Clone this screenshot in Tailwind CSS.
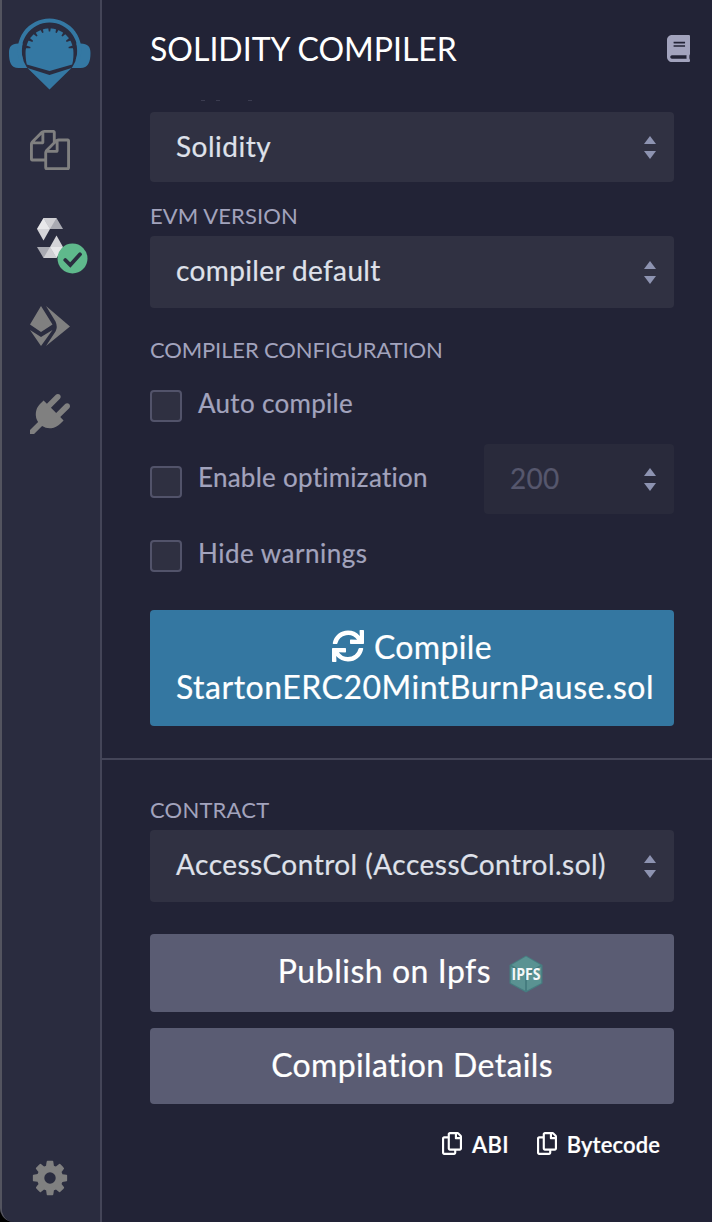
<!DOCTYPE html>
<html lang="en">
<head>
<meta charset="utf-8">
<title>Solidity Compiler</title>
<script src="https://cdn.jsdelivr.net/npm/@tailwindcss/browser@4"></script>
</head>
<body class="bg-black font-['Lato',sans-serif]">
<svg class="hidden">
  <symbol id="carets" viewBox="0 0 12 23"><path d="M6 0l6 8H0zM6 23l6-8H0z" fill="#8d93b1"/></symbol>
  <symbol id="copy" viewBox="0 0 448 512"><path fill="#fff" d="M433.941 65.941l-51.882-51.882A48 48 0 0 0 348.118 0H176c-26.51 0-48 21.49-48 48v48H48c-26.51 0-48 21.49-48 48v320c0 26.51 21.49 48 48 48h224c26.51 0 48-21.49 48-48v-48h80c26.51 0 48-21.49 48-48V99.882a48 48 0 0 0-14.059-33.941zM266 464H54a6 6 0 0 1-6-6V150a6 6 0 0 1 6-6h74v224c0 26.51 21.49 48 48 48h96v42a6 6 0 0 1-6 6zm128-96H182a6 6 0 0 1-6-6V54a6 6 0 0 1 6-6h106v88c0 13.255 10.745 24 24 24h88v202a6 6 0 0 1-6 6zm6-256h-64V48h9.632c1.591 0 3.117.632 4.243 1.757l48.368 48.368a6 6 0 0 1 1.757 4.243V112z"/></symbol>
</svg>
<div class="flex h-[1222px] w-[712px] overflow-hidden rounded-bl-[14px] border-l-2 border-[#53545f] bg-[#222336]">
  <!-- icon rail -->
  <nav class="flex w-[100px] shrink-0 flex-col border-r-2 border-[#444558] bg-[#2a2c3f]">
    <svg class="mt-[18px] ml-[6px] h-[72px] w-[84px]" viewBox="8 18 84 72">
      <g fill="#3478a3">
        <path d="M25 43.500H18.500C11 43.500 9 47 9 53C9 62 11 68 18.500 68H28zM74 43.500H80.500C88 43.500 90.500 47 90.500 53C90.500 62 88 68 80.500 68H71z"/>
        <circle cx="49.500" cy="51" r="27.800" fill="#2a2c3f"/>
        <path d="M19.200 60A31.800 31.800 0 1 1 79.800 60L75.700 60A27.900 27.900 0 1 0 23.300 60z"/>
        <path d="M27.500 68L49.500 75L71.500 68L49.500 89.500z"/>
        <path d="M26.800 64.500C25.300 58 25.500 51 25.700 50A23.900 23.900 0 0 1 73.300 50C73.700 54 73.500 60 72.200 64.500L49.500 71z"/>
      </g>
      <g fill="#2a2c3f">
        <path id="notch" d="M47.900 26H51.100L50.200 31.600H48.800z"/>
        <use href="#notch" transform="rotate(20 49.500 51)"/><use href="#notch" transform="rotate(40 49.500 51)"/><use href="#notch" transform="rotate(60 49.500 51)"/><use href="#notch" transform="rotate(80 49.500 51)"/>
        <use href="#notch" transform="rotate(-20 49.500 51)"/><use href="#notch" transform="rotate(-40 49.500 51)"/><use href="#notch" transform="rotate(-60 49.500 51)"/><use href="#notch" transform="rotate(-80 49.500 51)"/>
      </g>
    </svg>
    <svg class="mt-10 ml-7 size-10" viewBox="0 0 1792 1792" fill="#808080"><path d="M1696 384q40 0 68 28t28 68v1216q0 40-28 68t-68 28h-960q-40 0-68-28t-28-68v-288h-544q-40 0-68-28t-28-68v-672q0-40 20-88t48-76l408-408q28-28 76-48t88-20h416q40 0 68 28t28 68v328q68-40 128-40h416zm-544 213l-299 299h299v-299zm-640-384l-299 299h299v-299zm196 647l316-316v-416h-384v416q0 40-28 68t-68 28h-416v640h512v-256q0-40 20-88t48-76zm956 804v-1152h-384v416q0 40-28 68t-68 28h-416v640h896z"/></svg>
    <div class="relative mt-12 ml-[35px] h-10 w-[26px]">
      <svg class="h-10 w-[26px]" viewBox="0 0 26 40" fill="#fff">
        <g id="half"><path opacity=".45" d="M6.500 0H19.500L13 11H0z"/><path opacity=".6" d="M6.500 0H19.500L26 11H13z"/><path opacity=".8" d="M6.500 0L0 11L6.500 22.500L13 11z"/></g>
        <use href="#half" transform="rotate(180 13 20)"/>
      </svg>
      <svg class="absolute top-[25px] left-5 size-[31px]" viewBox="0 0 31 31"><circle cx="15.500" cy="15.500" r="15" fill="#5fb98c"/><path d="M8.300 17L13.300 22L23 11.300" fill="none" stroke="#2a2c3f" stroke-width="3.800" stroke-linecap="round"/></svg>
    </div>
    <svg class="mt-12 ml-7 size-10" viewBox="30 306 40 40" fill="#808080"><path d="M41 306L52.500 324.500L41 332L30 324.500zM30 330L41 337L52.500 330L41 346zM46 306L70 326.500L46 346L55.500 331.500Q58 327 55.500 321.500z"/></svg>
    <svg class="mt-12 ml-7 size-10" viewBox="0 0 1792 1792" fill="#808080"><path d="M1755 453q37 38 37 90.500t-37 90.500l-401 400 150 150-160 160q-163 163-389.500 186.500t-411.500-100.500l-362 362h-181v-181l362-362q-124-185-100.500-411.500t186.500-389.500l160-160 150 150 400-401q38-37 91-37t90 37 37 90.500-37 90.500l-400 401 234 234 401-400q38-37 91-37t90 37z"/></svg>
    <svg class="mt-auto mb-6 ml-7 size-10" viewBox="0 0 1792 1792" fill="#808080"><path d="M1152 896q0-106-75-181t-181-75-181 75-75 181 75 181 181 75 181-75 75-181zm512-109v222q0 12-8 23t-20 13l-185 28q-19 54-39 91 35 50 107 138 10 12 10 25t-9 23q-27 37-99 108t-94 71q-12 0-26-9l-138-108q-44 23-91 38-16 136-29 186-7 28-36 28h-222q-14 0-24.500-8.500t-11.500-21.500l-28-184q-49-16-90-37l-141 107q-10 9-25 9-14 0-25-11-126-114-165-168-7-10-7-23 0-12 8-23 15-21 51-66.500t54-70.500q-27-50-41-99l-183-27q-13-2-21-12.500t-8-23.500v-222q0-12 8-23t19-13l186-28q14-46 39-92-40-57-107-138-10-12-10-24 0-10 9-23 26-36 98.500-107.500t94.500-71.500q13 0 26 10l138 107q44-23 91-38 16-136 29-186 7-28 36-28h222q14 0 24.500 8.500t11.500 21.500l28 184q49 16 90 37l142-107q9-9 24-9 13 0 25 10 129 119 165 170 7 8 7 22 0 12-8 23-15 21-51 66.500t-54 70.500q26 50 41 98l183 28q13 2 21 12.500t8 23.500z"/></svg>
  </nav>

  <main class="flex min-w-0 flex-1 flex-col text-[#a2a3bd] [-webkit-text-stroke:0.2px]">
    <header class="flex h-[100px] shrink-0 items-start justify-between pt-[29px] pr-[22px] pl-12">
      <h1 class="text-[32px] leading-10 text-white [-webkit-text-stroke:0]">SOLIDITY COMPILER</h1>
      <svg class="mt-1.5 h-[27px] w-[23px]" viewBox="0 0 448 512" preserveAspectRatio="none" fill="#a2a3bd"><path d="M448 360V24c0-13.300-10.700-24-24-24H96C43 0 0 43 0 96v320c0 53 43 96 96 96h328c13.300 0 24-10.700 24-24v-16c0-7.500-3.500-14.300-8.900-18.700-4.200-15.400-4.200-59.300 0-74.700 5.400-4.300 8.900-11.100 8.900-18.600zM128 134c0-3.300 2.700-6 6-6h212c3.300 0 6 2.700 6 6v20c0 3.300-2.700 6-6 6H134c-3.300 0-6-2.700-6-6v-20zm0 64c0-3.300 2.700-6 6-6h212c3.300 0 6 2.700 6 6v20c0 3.300-2.700 6-6 6H134c-3.300 0-6-2.700-6-6v-20zm253.400 250H96c-17.700 0-32-14.300-32-32 0-17.600 14.400-32 32-32h285.400c-1.900 17.100-1.900 46.900 0 64z"/></svg>
    </header>

    <div class="flex flex-1 flex-col overflow-hidden">
      <section class="flex flex-col border-b-2 border-[#444558] pr-[38px] pb-8 pl-12">
        <!-- bottom edge of the label scrolled under the header -->
        <div class="flex h-3 pl-[51px]"><i class="h-px w-1 bg-[#3b3c50]"></i><i class="ml-[11px] h-px w-1 bg-[#3b3c50]"></i><i class="ml-7 h-px w-1 bg-[#3b3c50]"></i></div>
        <div class="flex h-[70px] items-center justify-between rounded bg-[#303142] pr-[18px] pl-[26px]"><span class="pb-0.5 text-[28px] leading-8 tracking-[0.5px] text-[#dfe1ea]">Solidity</span><svg class="h-[23px] w-3"><use href="#carets"/></svg></div>
        <div class="mt-5 h-[34px] text-[22px] leading-[28px] tracking-[0.1px] [-webkit-text-stroke:0]">EVM VERSION</div>
        <div class="flex h-[72px] items-center justify-between rounded bg-[#303142] pr-[18px] pl-[26px]"><span class="pb-1 text-[28px] leading-8 tracking-[0.37px] text-[#dfe1ea]">compiler default</span><svg class="h-[23px] w-3"><use href="#carets"/></svg></div>
        <div class="mt-7 text-[22px] leading-[28px] tracking-[-0.13px] [-webkit-text-stroke:0]">COMPILER CONFIGURATION</div>
        <div class="mt-[22px] flex h-9 items-start gap-4 text-[26px] leading-9"><i class="mt-1 size-8 rounded border-2 border-[#52536a] bg-[#2f3041]"></i><span class="-mt-px tracking-[0.3px]">Auto compile</span></div>
        <div class="mt-[22px] flex h-[70px] items-start text-[26px] leading-9"><i class="mt-[22px] mr-4 size-8 rounded border-2 border-[#52536a] bg-[#2f3041]"></i><span class="mt-[15px] tracking-[0.26px]">Enable optimization</span>
          <div class="ml-auto flex h-[70px] w-[190px] items-center justify-between rounded bg-[#292a3b] pr-[18px] pl-[26px]"><span class="pb-0.5 text-[28px] leading-8 tracking-[0.3px] text-[#56576d]">200</span><svg class="h-[23px] w-3"><use href="#carets"/></svg></div>
        </div>
        <div class="mt-5 flex h-[38px] items-start gap-4 text-[26px] leading-9"><i class="mt-1.5 size-8 rounded border-2 border-[#52536a] bg-[#2f3041]"></i><span class="mt-px tracking-[0.5px]">Hide warnings</span></div>
        <button class="mt-[38px] flex h-[116px] flex-col items-center rounded bg-[#3477a1] pt-[17px] text-[32px] leading-10 text-white">
          <span class="flex h-10 gap-2.5 tracking-[0.35px]"><svg class="mt-[3px] size-8" viewBox="0 0 512 512" fill="#fff"><path d="M440.650 12.570l4 82.770A247.160 247.160 0 0 0 255.830 8C134.730 8 33.910 94.920 12.290 209.820A12 12 0 0 0 24.090 224h49.050a12 12 0 0 0 11.670-9.260 175.910 175.910 0 0 1 317-56.940l-101.460-4.860a12 12 0 0 0-12.570 12v47.410a12 12 0 0 0 12 12H500a12 12 0 0 0 12-12V12a12 12 0 0 0-12-12h-47.370a12 12 0 0 0-11.980 12.570zM255.830 432a175.610 175.610 0 0 1-146-77.800l101.800 4.870a12 12 0 0 0 12.570-12v-47.400a12 12 0 0 0-12-12H12a12 12 0 0 0-12 12V500a12 12 0 0 0 12 12h47.350a12 12 0 0 0 12-12.600l-4.150-82.570A247.170 247.170 0 0 0 255.830 504c121.110 0 221.930-86.920 243.550-201.820a12 12 0 0 0-11.800-14.180h-49.050a12 12 0 0 0-11.670 9.260A175.860 175.860 0 0 1 255.830 432z"/></svg>Compile</span>
          <span class="pl-1.5 tracking-[0.5px]">StartonERC20MintBurnPause.sol</span>
        </button>
      </section>
      <section class="flex flex-col pt-9 pr-[38px] pl-12">
        <div class="h-[34px] text-[22px] leading-[28px] tracking-[0.2px] [-webkit-text-stroke:0]">CONTRACT</div>
        <div class="flex h-[72px] items-center justify-between rounded bg-[#303142] pr-[18px] pl-[26px]"><span class="pb-1 text-[28px] leading-8 tracking-[0.48px] text-[#dfe1ea]">AccessControl (AccessControl.sol)</span><svg class="h-[23px] w-3"><use href="#carets"/></svg></div>
        <button class="mt-8 flex h-[78px] items-start justify-center gap-[18px] rounded bg-[#5a5c73] pt-[17px] pr-[3px] text-[32px] leading-10 text-white"><span class="tracking-[0.52px]">Publish on Ipfs</span>
          <svg class="mt-1 h-[38px] w-[34px]" viewBox="0 0 34 38"><path d="M17 .5L33.500 10V28.500L17 37.500L.5 28.500V10z" fill="#467d80"/><path d="M17 1.500L31.500 10L17 18L2.500 10zM1.800 11.500L16 19.500V35.500L1.800 28zM32.200 11.500L18 19.500V35.500L32.200 28z" fill="#5a9292"/><text x="17" y="25" text-anchor="middle" textLength="29" lengthAdjust="spacingAndGlyphs" font-family="Open Sans" font-weight="700" font-size="15.500" fill="#f4f7f8">IPFS</text></svg>
        </button>
        <button class="mt-4 flex h-[76px] items-start justify-center rounded bg-[#5a5c73] pt-[17px] text-[32px] leading-10 text-white"><span class="tracking-[0.35px]">Compilation Details</span></button>
        <div class="mt-[27px] flex h-7 justify-end gap-7 pr-3.5 text-[22px] leading-[28px] font-semibold text-white">
          <div class="flex gap-2.5"><svg class="mt-px h-[23px] w-5"><use href="#copy"/></svg><span class="tracking-[0.3px]">ABI</span></div>
          <div class="flex gap-2.5"><svg class="mt-px h-[23px] w-5"><use href="#copy"/></svg><span class="tracking-[0.12px]">Bytecode</span></div>
        </div>
      </section>
    </div>
  </main>
</div>
</body>
</html>
